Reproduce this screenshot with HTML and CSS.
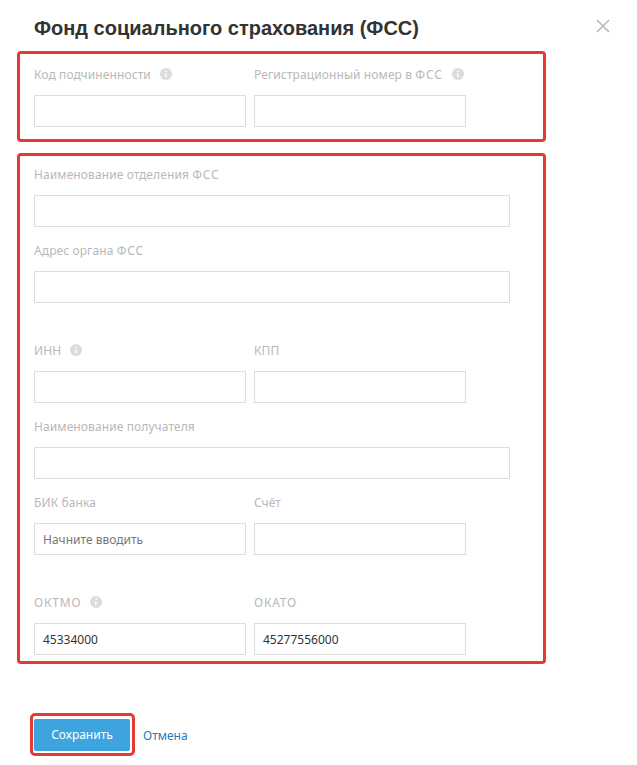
FILE: index.html
```html
<!DOCTYPE html>
<html lang="ru">
<head>
<meta charset="utf-8">
<title>Фонд социального страхования (ФСС)</title>
<link rel="stylesheet" href="styles.css">
</head>
<body>
<main class="dialog">
  <header class="head">
    <h1 class="title">Фонд социального страхования (ФСС)</h1>
    <svg class="close" width="14" height="14" viewBox="0 0 14 14"><path d="M1 1l12 12M13 1L1 13" stroke="#b5b5b5" stroke-width="1.5" fill="none"/></svg>
  </header>
  <section class="group group-top">
    <div class="row">
      <div class="field half"><label class="label"><span>Код подчиненности</span><svg class="info" width="12" height="12" viewBox="0 0 12 12"><circle cx="6" cy="6" r="6" fill="#dcdcdc"/><path d="M6.2 2.6v1.3M5.9 5.2v4" stroke="#fff" stroke-width="1.4"/></svg></label><div class="input"></div></div>
      <div class="field half"><label class="label"><span>Регистрационный номер в <span class="caps">ФСС</span></span><svg class="info" width="12" height="12" viewBox="0 0 12 12"><circle cx="6" cy="6" r="6" fill="#dcdcdc"/><path d="M6.2 2.6v1.3M5.9 5.2v4" stroke="#fff" stroke-width="1.4"/></svg></label><div class="input"></div></div>
    </div>
  </section>
  <section class="group group-main">
    <div class="field full"><label class="label"><span>Наименование отделения <span class="caps">ФСС</span></span></label><div class="input"></div></div>
    <div class="field full gap"><label class="label"><span>Адрес органа <span class="caps">ФСС</span></span></label><div class="input"></div></div>
    <div class="row gap-big">
      <div class="field half"><label class="label"><span>ИНН</span><svg class="info" width="12" height="12" viewBox="0 0 12 12"><circle cx="6" cy="6" r="6" fill="#dcdcdc"/><path d="M6.2 2.6v1.3M5.9 5.2v4" stroke="#fff" stroke-width="1.4"/></svg></label><div class="input"></div></div>
      <div class="field half"><label class="label"><span>КПП</span></label><div class="input"></div></div>
    </div>
    <div class="field full gap"><label class="label"><span>Наименование получателя</span></label><div class="input"></div></div>
    <div class="row gap">
      <div class="field half"><label class="label"><span>БИК банка</span></label><div class="input placeholder">Начните вводить</div></div>
      <div class="field half"><label class="label"><span>Счёт</span></label><div class="input"></div></div>
    </div>
    <div class="row gap-big">
      <div class="field half"><label class="label"><span class="caps">ОКТМО</span><svg class="info" width="12" height="12" viewBox="0 0 12 12"><circle cx="6" cy="6" r="6" fill="#dcdcdc"/><path d="M6.2 2.6v1.3M5.9 5.2v4" stroke="#fff" stroke-width="1.4"/></svg></label><div class="input value">45334000</div></div>
      <div class="field half"><label class="label"><span class="caps">ОКАТО</span></label><div class="input value">45277556000</div></div>
    </div>
  </section>
  <footer class="actions">
    <div class="save-frame"><button class="save">Сохранить</button></div>
    <a class="cancel" href="#">Отмена</a>
  </footer>
</main>
</body>
</html>
```
FILE: styles.css
```css
* { box-sizing: border-box; }
html, body { margin: 0; background: #fff; }
body { font-family: "Noto Sans", sans-serif; width: 637px; height: 765px; overflow: hidden; }
.dialog { padding: 0 0 0 17px; }
.head { display: flex; justify-content: space-between; align-items: flex-start; height: 51px; padding: 17px 27px 0 17px; }
.title { margin: 0; font: bold 20px/22px "Liberation Sans", sans-serif; color: #333; }
.close { margin-top: 2px; }
.group { width: 529px; border: 3px solid #e53a31; border-radius: 4px; padding-left: 14px; }
.group-top { height: 91px; padding-top: 12px; }
.group-main { height: 511px; margin-top: 11px; padding-top: 10px; }
.row { display: flex; gap: 8px; }
.field.half { width: 212px; }
.field.full { width: 476px; }
.gap { margin-top: 15px; }
.gap-big { margin-top: 39px; }
.label { display: flex; align-items: center; height: 16px; margin-bottom: 13px; padding-top: 1px; font: 12px/16px "Noto Sans", sans-serif; letter-spacing: 0.1px; color: #b8b8b8; white-space: nowrap; }
.caps { letter-spacing: 0.8px; }
.info { flex: none; margin-left: 9px; margin-top: -1px; }
.input { height: 32px; border: 1px solid #dcdcdc; background: #fff; padding: 1px 8px 0; font: 12px/30px "Noto Sans", sans-serif; }
.placeholder { color: #777; }
.value { color: #333; }
.actions { display: flex; align-items: center; margin: 49px 0 0 13px; }
.save-frame { width: 105px; height: 43px; border: 3px solid #e53a31; border-radius: 5px; padding: 3px 2px 2px 1px; }
.save { display: block; width: 96px; height: 32px; border: 0; border-radius: 2px; background: #3ea4e0; color: #fff; font: 12px/32px "Noto Sans", sans-serif; padding: 0; }
.cancel { margin-left: 8px; padding-top: 2px; color: #2a78b8; font: 12px/16px "Noto Sans", sans-serif; text-decoration: none; }
```
